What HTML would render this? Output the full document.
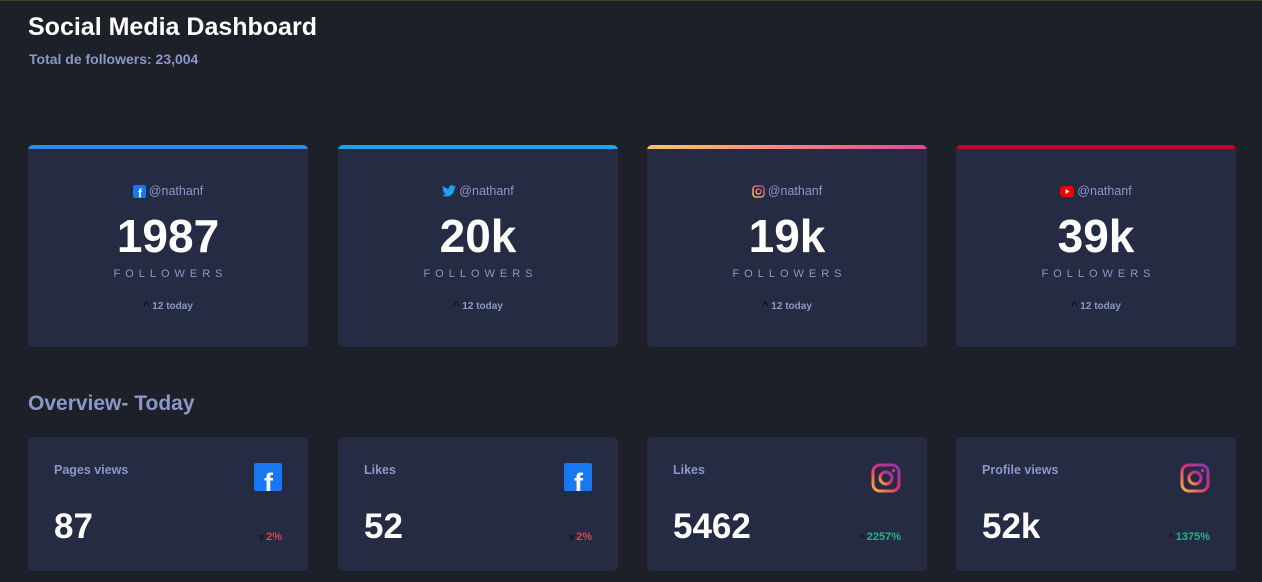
<!DOCTYPE html>
<html><head><style>
*{margin:0;padding:0;box-sizing:border-box}
body{width:1262px;height:582px;background:#1e2029;font-family:"Liberation Sans",sans-serif;position:relative;overflow:hidden;border-top:1px solid #3b4a22}
h1{position:absolute;left:28px;top:12px;font-size:25px;color:#fff;font-weight:bold}
.tot{position:absolute;left:29px;top:50px;font-size:14px;color:#8b97c6;font-weight:bold}
.card{position:absolute;top:144px;width:280px;height:202px;background:#252b43;border-radius:5px;overflow:hidden;text-align:center}
.bar{height:4px}
.h{margin-top:35px;font-size:12.5px;color:#8b97c6;display:flex;justify-content:center;align-items:center;gap:3px}
.num{font-size:46px;font-weight:bold;color:#fff;margin-top:13px;line-height:50px}
.f{font-size:11px;letter-spacing:5px;color:#8b97c6;margin-top:7px;padding-left:5px}
.t{font-size:10px;font-weight:bold;color:#8b97c6;margin-top:20px}
.t span{color:#111;font-size:11px}
h2{position:absolute;left:28px;top:391px;font-size:21px;color:#8b97c6;font-weight:bold}
.oc{position:absolute;top:436px;width:280px;height:134px;background:#252b43;border-radius:5px}
.ol{position:absolute;left:26px;top:26px;font-size:12.5px;font-weight:bold;color:#8b97c6}
.on{position:absolute;left:26px;top:70px;font-size:35px;font-weight:bold;color:#fff}
.ic{position:absolute;right:26px;top:26px}
.p{position:absolute;right:26px;top:94px;font-size:11px;font-weight:bold}
.p span{color:#111;font-size:9px;margin-right:2px}
</style></head><body>
<h1>Social Media Dashboard</h1>
<div class="tot">Total de followers: 23,004</div>

<div class="card" style="left:28px"><div class="bar" style="background:#2a8bf0"></div>
<div class="h"><svg width="13" height="13"><rect width="13" height="13" rx="2" fill="#1877f2"/><text x="5" y="12.5" font-size="12" font-weight="bold" fill="#fff" font-family="Liberation Sans">f</text></svg>@nathanf</div>
<div class="num">1987</div><div class="f">FOLLOWERS</div><div class="t"><span>^</span> 12 today</div></div>

<div class="card" style="left:338px"><div class="bar" style="background:#1da1f2"></div>
<div class="h"><svg width="14" height="12" viewBox="0 0 24 20"><path d="M24 2.4a10 10 0 0 1-2.8.8 5 5 0 0 0 2.1-2.7 10 10 0 0 1-3.1 1.2A4.9 4.9 0 0 0 11.8 6 14 14 0 0 1 1.7.9a4.9 4.9 0 0 0 1.5 6.6A4.9 4.9 0 0 1 1 6.9a4.9 4.9 0 0 0 3.9 4.8 4.9 4.9 0 0 1-2.2.1 4.9 4.9 0 0 0 4.6 3.4A9.900 9.900 0 0 1 0 17.2 14 14 0 0 0 7.5 19.4c9 0 14-7.5 14-14v-.6A10 10 0 0 0 24 2.4z" fill="#1da1f2"/></svg>@nathanf</div>
<div class="num">20k</div><div class="f">FOLLOWERS</div><div class="t"><span>^</span> 12 today</div></div>

<div class="card" style="left:647px"><div class="bar" style="background:linear-gradient(90deg,#fdc468,#df4996)"></div>
<div class="h"><svg width="13" height="13"><defs><linearGradient id="g0" x1="0" y1="1" x2="1" y2="0"><stop offset="0" stop-color="#fdc468"/><stop offset="1" stop-color="#c13584"/></linearGradient></defs><rect x="1" y="1" width="11" height="11" rx="3" fill="none" stroke="url(#g0)" stroke-width="1.6"/><circle cx="6.5" cy="6.5" r="2.5" fill="none" stroke="url(#g0)" stroke-width="1.4"/></svg>@nathanf</div>
<div class="num">19k</div><div class="f">FOLLOWERS</div><div class="t"><span>^</span> 12 today</div></div>

<div class="card" style="left:956px"><div class="bar" style="background:#c4032b"></div>
<div class="h"><svg width="14" height="11"><rect width="14" height="11" rx="3" fill="#e00"/><path d="M5.5 3v5l4-2.5z" fill="#fff"/></svg>@nathanf</div>
<div class="num">39k</div><div class="f">FOLLOWERS</div><div class="t"><span>^</span> 12 today</div></div>

<h2>Overview- Today</h2>

<div class="oc" style="left:28px"><div class="ol">Pages views</div><svg class="ic" width="28" height="28"><rect width="28" height="28" rx="2" fill="#1877f2"/><text x="10" y="29" font-size="27" font-weight="bold" fill="#fff" font-family="Liberation Sans">f</text></svg><div class="on">87</div><div class="p" style="color:#dc414c"><span>v</span>2%</div></div>
<div class="oc" style="left:338px"><div class="ol">Likes</div><svg class="ic" width="28" height="28"><rect width="28" height="28" rx="2" fill="#1877f2"/><text x="10" y="29" font-size="27" font-weight="bold" fill="#fff" font-family="Liberation Sans">f</text></svg><div class="on">52</div><div class="p" style="color:#dc414c"><span>v</span>2%</div></div>
<div class="oc" style="left:647px"><div class="ol">Likes</div><svg class="ic" width="30" height="30"><defs><linearGradient id="g1" x1="0" y1="1" x2="1" y2="0"><stop offset="0" stop-color="#fdb045"/><stop offset=".5" stop-color="#e1306c"/><stop offset="1" stop-color="#833ab4"/></linearGradient></defs><rect x="2" y="2" width="26" height="26" rx="7" fill="none" stroke="url(#g1)" stroke-width="3"/><circle cx="15" cy="15" r="6" fill="none" stroke="url(#g1)" stroke-width="3"/><circle cx="22.5" cy="7.5" r="1.7" fill="#c13584"/></svg><div class="on">5462</div><div class="p" style="color:#1eb589"><span>^</span>2257%</div></div>
<div class="oc" style="left:956px"><div class="ol">Profile views</div><svg class="ic" width="30" height="30"><rect x="2" y="2" width="26" height="26" rx="7" fill="none" stroke="url(#g1)" stroke-width="3"/><circle cx="15" cy="15" r="6" fill="none" stroke="url(#g1)" stroke-width="3"/><circle cx="22.5" cy="7.5" r="1.7" fill="#c13584"/></svg><div class="on">52k</div><div class="p" style="color:#1eb589"><span>^</span>1375%</div></div>
</body></html>
